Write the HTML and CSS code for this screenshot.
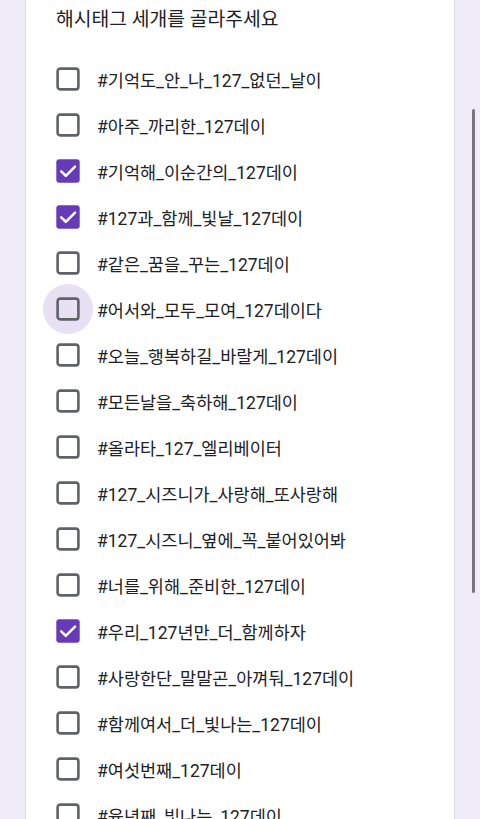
FILE: index.html
```html
<!DOCTYPE html>
<html lang="ko">

<head>
    <meta charset="UTF-8">
    <meta name="viewport" content="width=device-width, initial-scale=1.0">
    <title>해시태그 고르기</title>
    <link rel="stylesheet" href="styles.css">
</head>

<body>
    <!-- Question card -->
    <div class="card">
        <h1 class="title">해시태그 세개를 골라주세요</h1>
        <ul class="options">
            <li class="option"><span class="box"></span><span class="label">#기억도_안_나_127_없던_날이</span></li>
            <li class="option"><span class="box"></span><span class="label">#아주_까리한_127데이</span></li>
            <li class="option checked"><span class="box"></span><span class="label">#기억해_이순간의_127데이</span></li>
            <li class="option checked"><span class="box"></span><span class="label">#127과_함께_빛날_127데이</span></li>
            <li class="option"><span class="box"></span><span class="label">#같은_꿈을_꾸는_127데이</span></li>
            <li class="option hover"><span class="box"></span><span class="label">#어서와_모두_모여_127데이다</span></li>
            <li class="option"><span class="box"></span><span class="label">#오늘_행복하길_바랄게_127데이</span></li>
            <li class="option"><span class="box"></span><span class="label">#모든날을_축하해_127데이</span></li>
            <li class="option"><span class="box"></span><span class="label">#올라타_127_엘리베이터</span></li>
            <li class="option"><span class="box"></span><span class="label">#127_시즈니가_사랑해_또사랑해</span></li>
            <li class="option"><span class="box"></span><span class="label">#127_시즈니_옆에_꼭_붙어있어봐</span></li>
            <li class="option"><span class="box"></span><span class="label">#너를_위해_준비한_127데이</span></li>
            <li class="option checked"><span class="box"></span><span class="label">#우리_127년만_더_함께하자</span></li>
            <li class="option"><span class="box"></span><span class="label">#사랑한단_말말곤_아껴둬_127데이</span></li>
            <li class="option"><span class="box"></span><span class="label">#함께여서_더_빛나는_127데이</span></li>
            <li class="option"><span class="box"></span><span class="label">#여섯번째_127데이</span></li>
            <li class="option"><span class="box"></span><span class="label">#육년째_빛나는_127데이</span></li>
        </ul>
    </div>

    <!-- Scroll indicator -->
    <div class="scrollbar"></div>

    <script>
        // draw the checkbox icons
        const empty = '<svg width="24" height="24" viewBox="0 0 24 24"><rect x="1.6" y="1.6" width="20.8" height="20.8" rx="2.6" fill="none" stroke="#5f6368" stroke-width="2.6"/></svg>';
        const ticked = '<svg width="24" height="24" viewBox="0 0 24 24"><rect x="0.3" y="0.3" width="23.4" height="23.4" rx="3" fill="#673ab7"/><path d="M5.2 12.4 L9.8 16.8 L19 7.6" fill="none" stroke="#fff" stroke-width="2.6" stroke-linecap="round" stroke-linejoin="round"/></svg>';

        document.querySelectorAll('.option').forEach(function (item) {
            const box = item.querySelector('.box');
            box.innerHTML = item.classList.contains('checked') ? ticked : empty;
        });
    </script>
</body>

</html>
```

FILE: styles.css
```css
/* Page */
body {
    margin: 0;
    height: 819px;
    overflow: hidden;
    background-color: #f0ebf8;
    font-family: Roboto, "Noto Sans CJK KR", sans-serif;
    color: #202124;
}

/* Question card */
.card {
    margin: 0 25px;
    height: 819px;
    background-color: #fff;
    border-left: 1px solid #dadce0;
    border-right: 1px solid #dadce0;
    padding: 0 30px;
}

.title {
    margin: 0;
    padding-top: 7px;
    font-size: 19.3px;
    font-weight: normal;
    line-height: 26px;
}

/* Option list */
.options {
    list-style: none;
    margin: 0;
    padding: 23px 0 0;
}

.option {
    display: flex;
    align-items: center;
    gap: 17px;
    height: 46px;
    font-size: 17.5px;
}

.box {
    position: relative;
    width: 24px;
    height: 24px;
    flex-shrink: 0;
}

.box svg {
    position: relative;
    display: block;
}

/* Hover ripple */
.option.hover .box::before {
    content: "";
    position: absolute;
    left: -13px;
    top: -13px;
    width: 50px;
    height: 50px;
    border-radius: 50%;
    background-color: #e8e0f3;
}

.label {
    white-space: nowrap;
}

/* Scroll indicator */
.scrollbar {
    position: fixed;
    left: 472px;
    top: 109px;
    width: 3px;
    height: 484px;
    border-radius: 2px;
    background-color: #79747e;
}
```
